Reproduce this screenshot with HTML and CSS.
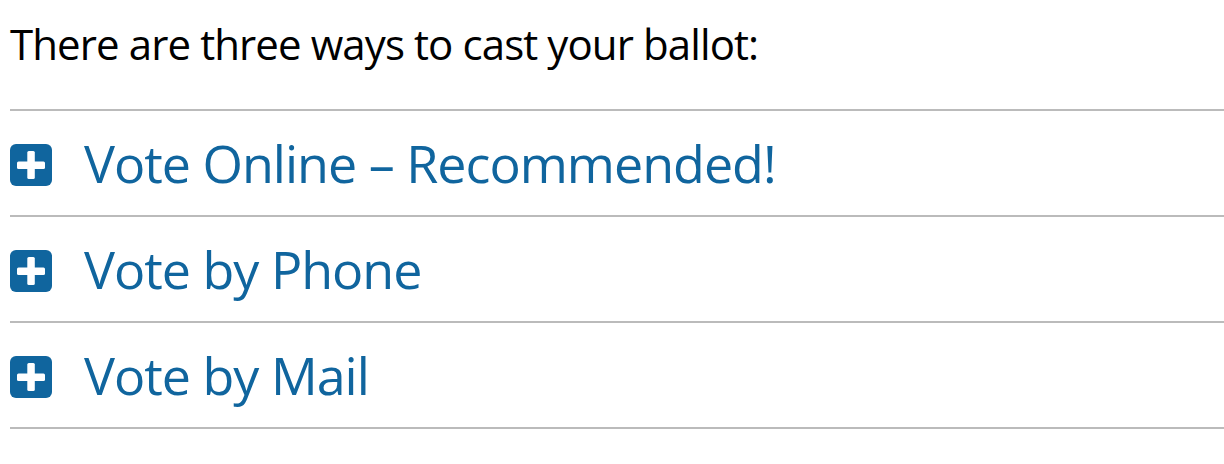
FILE: index.html
```html
<!DOCTYPE html>
<html lang="en">
<head>
<meta charset="utf-8">
<title>Ways to vote</title>
<link rel="stylesheet" href="styles.css">
</head>
<body>
<main class="page">
  <p class="intro">There are three ways to cast your ballot:</p>
  <ul class="accordion">
    <li class="item">
      <span class="icon"><svg viewBox="0 0 42 42" width="42" height="42"><rect x="0" y="0" width="42" height="42" rx="6" fill="#10659e"/><rect x="7" y="17.5" width="28" height="7.5" rx="1.5" fill="#fff"/><rect x="17.3" y="7" width="7.5" height="28" rx="1.5" fill="#fff"/></svg></span>
      <span class="title">Vote Online – Recommended!</span>
    </li>
    <li class="item">
      <span class="icon"><svg viewBox="0 0 42 42" width="42" height="42"><rect x="0" y="0" width="42" height="42" rx="6" fill="#10659e"/><rect x="7" y="17.5" width="28" height="7.5" rx="1.5" fill="#fff"/><rect x="17.3" y="7" width="7.5" height="28" rx="1.5" fill="#fff"/></svg></span>
      <span class="title">Vote by Phone</span>
    </li>
    <li class="item">
      <span class="icon"><svg viewBox="0 0 42 42" width="42" height="42"><rect x="0" y="0" width="42" height="42" rx="6" fill="#10659e"/><rect x="7" y="17.5" width="28" height="7.5" rx="1.5" fill="#fff"/><rect x="17.3" y="7" width="7.5" height="28" rx="1.5" fill="#fff"/></svg></span>
      <span class="title">Vote by Mail</span>
    </li>
  </ul>
</main>
</body>
</html>
```
FILE: styles.css
```css
html, body {
  margin: 0;
  padding: 0;
  background: #fff;
}
body {
  font-family: "Open Sans", "Liberation Sans", sans-serif;
}
.page {
  padding: 0 0 0 10px;
}
.intro {
  margin: 0;
  box-sizing: border-box;
  padding-top: 14px;
  height: 111px;
  font-size: 42px;
  line-height: 60px;
  letter-spacing: -0.9px;
  color: #000;
  border-bottom: 2px solid #bbbbbb;
}
.accordion {
  list-style: none;
  margin: 0;
  padding: 0;
}
.item {
  display: flex;
  align-items: center;
  gap: 32px;
  box-sizing: border-box;
  height: 106px;
  padding-top: 4px;
  border-bottom: 2px solid #bbbbbb;
}
.icon {
  display: flex;
  width: 42px;
  height: 42px;
}
.title {
  margin-bottom: 4px;
  font-size: 52px;
  line-height: 64px;
  letter-spacing: -1px;
  color: #10659e;
}
```
